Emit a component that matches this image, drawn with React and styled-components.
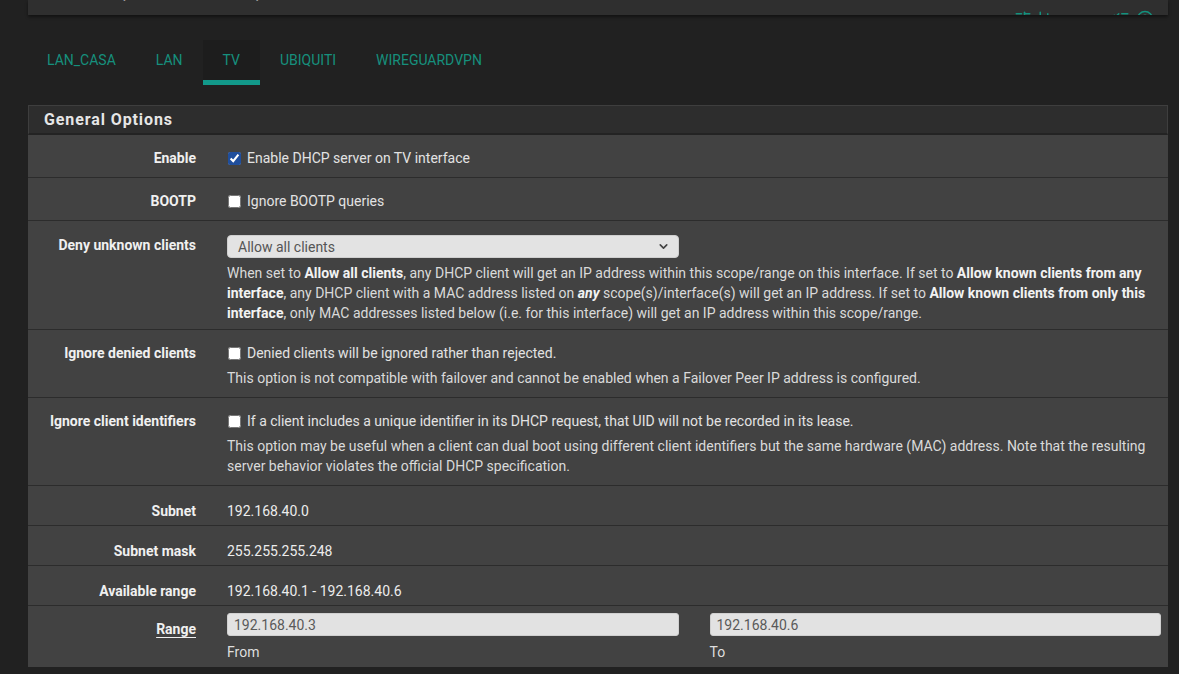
import React from 'react';
import styled, { createGlobalStyle } from 'styled-components';
import { SlidersHorizontal, BarChart3, ListChecks, HelpCircle, ChevronDown } from 'lucide-react';

const GlobalStyle = createGlobalStyle`
  html, body {
    margin: 0;
    padding: 0;
    background: #212121;
    font-family: Roboto, "Liberation Sans", sans-serif;
    font-size: 14px;
    color: #e0e0e0;
  }
`;

const Page = styled.div`
  padding: 0 11px 6px 28px;
`;

const TopBar = styled.div`
  height: 15px;
  overflow: hidden;
  background: #2f2f2f;
  box-shadow: 0 2px 3px rgba(0, 0, 0, 0.45);
  display: flex;
  align-items: flex-end;
  justify-content: space-between;
  padding: 0 14px 0 15px;
`;

const Crumbs = styled.div`
  font-size: 20px;
  line-height: 20px;
  color: #9a9a9a;
  margin-bottom: 12px;
`;

const TopIcons = styled.div`
  display: flex;
  gap: 6px;
  color: #13927e;
  margin-bottom: -13px;
`;

const TabBar = styled.nav`
  display: flex;
  margin: 25px 0 0 -1px;
  height: 45px;
`;

const Tab = styled.div`
  padding: 0 20px;
  display: flex;
  align-items: center;
  font-size: 14px;
  color: #16907d;
  background: ${(p) => (p.$active ? '#1d1d1d' : 'transparent')};
  border-bottom: 5px solid ${(p) => (p.$active ? '#12998a' : 'transparent')};
  box-sizing: border-box;
  height: 45px;
`;

const Panel = styled.section`
  margin-top: 20px;
  background: #424242;
`;

const PanelHeading = styled.h2`
  margin: 0;
  height: 30px;
  box-sizing: border-box;
  padding: 0 15px;
  display: flex;
  align-items: center;
  background: #2d2d2d;
  border: 1px solid #3e3e3e;
  border-bottom: 2px solid #232323;
  font-size: 16px;
  font-weight: 700;
  letter-spacing: 0.9px;
  color: #e6e6e6;
`;

const Row = styled.div`
  display: grid;
  grid-template-columns: 184px 1fr;
  border-top: ${(p) => (p.$first ? 'none' : '1px solid #2c2c2c')};
  padding: ${(p) => p.$pad || '13px 0 9px'};
`;

const Label = styled.div`
  text-align: right;
  padding-right: 16px;
  font-weight: 700;
  font-size: 14px;
  line-height: 20px;
  color: #f0f0f0;
  margin-top: ${(p) => p.$offset || '0'};

  u {
    text-decoration-thickness: 1px;
    text-underline-offset: 3px;
  }
`;

const Content = styled.div`
  padding: 0 7px 0 15px;
  line-height: 20px;
`;

const CheckLine = styled.label`
  display: flex;
  align-items: center;
  gap: 6px;
  color: #e2e2e2;
`;

const Check = styled.input`
  width: 13px;
  height: 13px;
  margin: 0 0 0 1px;
  accent-color: #1f4e9c;
`;

const Help = styled.p`
  margin: 5px 0 0;
  color: #dadada;

  b {
    color: #f2f2f2;
  }
`;

const Value = styled.div`
  color: #ececec;
`;

const Half = styled.div`
  display: grid;
  grid-template-columns: 1fr 1fr;
  column-gap: 31px;
`;

const SelectBox = styled.div`
  height: 23px;
  box-sizing: border-box;
  background: #e3e3e3;
  border-radius: 4px;
  border: 1px solid #cfcfcf;
  display: flex;
  align-items: center;
  justify-content: space-between;
  padding: 0 8px 0 10px;
  color: #555;
  font-size: 14px;
`;

const Field = styled.div`
  display: flex;
  flex-direction: column;
`;

const TextInput = styled.div`
  height: 23px;
  box-sizing: border-box;
  background: #e2e2e2;
  border-radius: 3px;
  border: 1px solid #d0d0d0;
  display: flex;
  align-items: center;
  padding: 0 6px;
  color: #5a5a5a;
`;

const Caption = styled.span`
  margin-top: 6px;
  color: #dedede;
`;

export default function App() {
  const tabs = ['LAN_CASA', 'LAN', 'TV', 'UBIQUITI', 'WIREGUARDVPN'];

  return (
    <Page>
      <GlobalStyle />
      <TopBar>
        <Crumbs>Services / DHCP Server / TV</Crumbs>
        <TopIcons>
          <SlidersHorizontal size={18} />
          <BarChart3 size={18} />
          <span style={{ width: 44 }} />
          <ListChecks size={18} />
          <HelpCircle size={18} />
        </TopIcons>
      </TopBar>

      <TabBar>
        {tabs.map((t) => (
          <Tab key={t} $active={t === 'TV'}>{t}</Tab>
        ))}
      </TabBar>

      <Panel>
        <PanelHeading>General Options</PanelHeading>

        <Row $first>
          <Label>Enable</Label>
          <Content>
            <CheckLine>
              <Check type="checkbox" defaultChecked />
              Enable DHCP server on TV interface
            </CheckLine>
          </Content>
        </Row>

        <Row>
          <Label>BOOTP</Label>
          <Content>
            <CheckLine>
              <Check type="checkbox" />
              Ignore BOOTP queries
            </CheckLine>
          </Content>
        </Row>

        <Row $pad="14px 0 6px">
          <Label>Deny unknown clients</Label>
          <Content>
            <Half>
              <SelectBox>
                Allow all clients
                <ChevronDown size={13} strokeWidth={3} color="#444" />
              </SelectBox>
            </Half>
            <Help>
              When set to <b>Allow all clients</b>, any DHCP client will get an IP address within this
              scope/range on this interface. If set to <b>Allow known clients from any interface</b>, any
              DHCP client with a MAC address listed on <b><i>any</i></b> scope(s)/interface(s) will get an IP
              address. If set to <b>Allow known clients from only this interface</b>, only MAC addresses
              listed below (i.e. for this interface) will get an IP address within this scope/range.
            </Help>
          </Content>
        </Row>

        <Row>
          <Label>Ignore denied clients</Label>
          <Content>
            <CheckLine>
              <Check type="checkbox" />
              Denied clients will be ignored rather than rejected.
            </CheckLine>
            <Help>
              This option is not compatible with failover and cannot be enabled when a Failover Peer IP
              address is configured.
            </Help>
          </Content>
        </Row>

        <Row>
          <Label>Ignore client identifiers</Label>
          <Content>
            <CheckLine>
              <Check type="checkbox" />
              If a client includes a unique identifier in its DHCP request, that UID will not be recorded in
              its lease.
            </CheckLine>
            <Help>
              This option may be useful when a client can dual boot using different client identifiers but
              the same hardware (MAC) address. Note that the resulting server behavior violates the official
              DHCP specification.
            </Help>
          </Content>
        </Row>

        <Row $pad="15px 0 4px">
          <Label>Subnet</Label>
          <Content>
            <Value>192.168.40.0</Value>
          </Content>
        </Row>

        <Row $pad="15px 0 4px">
          <Label>Subnet mask</Label>
          <Content>
            <Value>255.255.255.248</Value>
          </Content>
        </Row>

        <Row $pad="15px 0 4px">
          <Label>Available range</Label>
          <Content>
            <Value>192.168.40.1 - 192.168.40.6</Value>
          </Content>
        </Row>

        <Row $pad="7px 0 5px">
          <Label $offset="6px">
            <u>Range</u>
          </Label>
          <Content>
            <Half>
              <Field>
                <TextInput>192.168.40.3</TextInput>
                <Caption>From</Caption>
              </Field>
              <Field>
                <TextInput>192.168.40.6</TextInput>
                <Caption>To</Caption>
              </Field>
            </Half>
          </Content>
        </Row>
      </Panel>
    </Page>
  );
}
